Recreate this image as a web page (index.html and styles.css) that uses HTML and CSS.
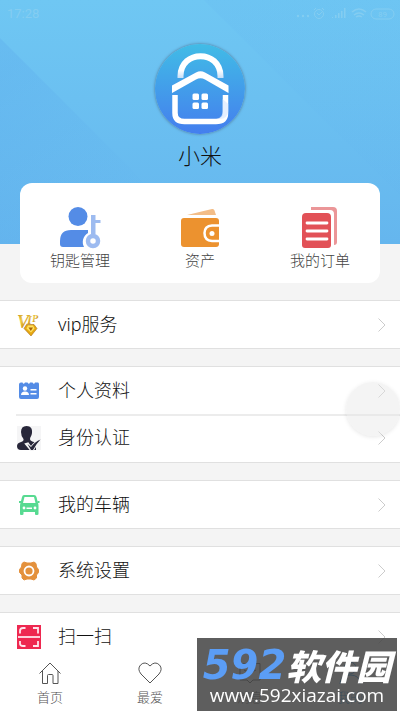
FILE: index.html
```html
<!DOCTYPE html>
<html lang="zh-CN">
<head>
<meta charset="utf-8">
<meta name="viewport" content="width=device-width, initial-scale=1">
<title>我的</title>
<link rel="stylesheet" href="styles.css">
</head>
<body>
<div class="app">
  <header class="hero">
    <svg class="hero-shapes" viewBox="0 0 400 244" preserveAspectRatio="none" aria-hidden="true">
      <defs>
        <linearGradient id="shadeLeft" x1="0" y1="0.2" x2="0.7" y2="0.8"><stop offset="0" stop-color="#5aa8ec" stop-opacity=".3"/><stop offset="1" stop-color="#5aa8ec" stop-opacity="0"/></linearGradient>
        <linearGradient id="shadeRight" x1="0" y1="0" x2="0.6" y2="0.6"><stop offset="0" stop-color="#5fb0ee" stop-opacity=".14"/><stop offset="1" stop-color="#5fb0ee" stop-opacity=".06"/></linearGradient>
      </defs>
      <path d="M0 38L160 198L206 244H0Z" fill="url(#shadeLeft)"/>
      <path d="M204 0L330 126L448 244H400V0Z" fill="url(#shadeRight)"/>
    </svg>
    <div class="status">
      <span>17:28</span>
      <svg width="100" height="14" viewBox="0 0 100 14" fill="none" stroke="currentColor" aria-hidden="true">
        <g fill="currentColor" stroke="none"><circle cx="3" cy="9" r="1.2"/><circle cx="8" cy="9" r="1.2"/><circle cx="13" cy="9" r="1.2"/><path d="M37 11h1v-1h-1zM40 11h1.500v-3H40zM43 11h1.500V6H43zM46 11h1.500V4H46zM49 11h1.500V1H49z"/></g>
        <circle cx="24" cy="7" r="4.500"/><path d="M22 6l2 2 3-3M19 3l2-2M29 3l-2-2"/>
        <path d="M57 5q7-6 14 0M59 8q5-4 10 0M61 10q3-2 6 0" stroke-width="1.500"/>
        <rect x="76" y="2" width="23" height="10" rx="5"/>
        <text x="87.500" y="10" text-anchor="middle" class="battery">89</text>
      </svg>
    </div>
    <div class="profile">
      <svg class="avatar" viewBox="0 0 90 90" role="img" aria-label="头像">
        <defs>
          <linearGradient id="disc" x1="0" y1="0" x2="0" y2="1"><stop offset="0" stop-color="#41bce6"/><stop offset="1" stop-color="#447eee"/></linearGradient>
          <linearGradient id="ring" x1="0" y1="0" x2="0" y2="1"><stop offset=".65" stop-color="#fff"/><stop offset="1" stop-color="#c7def8"/></linearGradient>
        </defs>
        <circle cx="45" cy="45" r="45" fill="url(#disc)"/>
        <path d="M25.500 34V32C26 5.500 65 5.500 65.500 32V34" fill="none" stroke="url(#ring)" stroke-width="6"/>
        <path d="M17 41.500L41 28.500Q45.500 26 50 28.500L73.500 41.500V49L50 35.500Q45.500 33 41 35.500L17 49Z" fill="#fff" stroke="#4b9fea" stroke-width="1" paint-order="stroke"/>
        <path d="M20 51V69Q20 77.500 29.500 77.500H61Q70.500 77.500 70.500 69V51" fill="none" stroke="#fff" stroke-width="5.500"/>
        <path d="M67.700 55V67Q67.700 73 62 74.800Q73 76 73.200 67V60Z" fill="#dceaff" opacity=".7"/>
        <g fill="#fff"><rect x="37.500" y="49.500" width="6.500" height="6.500" rx="1.500"/><rect x="46.500" y="49.500" width="6.500" height="6.500" rx="1.500"/><rect x="37.500" y="58.500" width="6.500" height="6.500" rx="1.500"/><rect x="46.500" y="58.500" width="6.500" height="6.500" rx="1.500"/></g>
      </svg>
      <h1 class="name">小米</h1>
    </div>
  </header>

  <nav class="card" aria-label="快捷入口">
    <a class="shortcut" href="#keys">
      <svg width="42" height="42" viewBox="0 0 42 42" aria-hidden="true">
        <circle cx="19" cy="9.500" r="9.500" fill="#548ce6"/>
        <path d="M1 37V34Q1 23 12 23H29V26C24 29 22.500 35 25 40H4Q1 40 1 37Z" fill="#548ce6"/>
        <path d="M32 8h4.500v5h5v3h-5v11h-4.500z" fill="#9dbbf0"/>
        <circle cx="34" cy="34" r="5" fill="none" stroke="#9dbbf0" stroke-width="4.500"/>
      </svg>
      <span>钥匙管理</span>
    </a>
    <a class="shortcut" href="#assets">
      <svg width="42" height="42" viewBox="0 0 42 42" aria-hidden="true">
        <path d="M8 8L33 2Q35 1.500 35.500 3.500L37 8Z" fill="#f3bd87"/>
        <rect x="2" y="11" width="38" height="29" rx="3" fill="#ec922f"/>
        <path d="M41 18.500H33Q25.500 19 25.500 26Q25.500 33.500 33 34H41" fill="none" stroke="#fff" stroke-width="2.500"/>
        <circle cx="33" cy="26.500" r="2.500" fill="#fff"/>
      </svg>
      <span>资产</span>
    </a>
    <a class="shortcut" href="#orders">
      <svg width="42" height="42" viewBox="0 0 42 42" aria-hidden="true">
        <path d="M12 0H34Q38 0 38 4V35Q38 38 35 38V7Q35 3 31 3H12Z" fill="#eb9698"/>
        <path d="M7 6H28Q32 6 32 10V38Q32 41 29 41H6Q3 41 3 38V10Q3 6 7 6Z" fill="#e25157"/>
        <path d="M8 16H28M8 24H28M8 32H28" stroke="#fff" stroke-width="2.800" stroke-linecap="round"/>
      </svg>
      <span>我的订单</span>
    </a>
  </nav>

  <main class="menu">
    <section class="group">
      <a class="row" href="#vip">
        <svg class="icon" viewBox="0 0 26 26" aria-hidden="true">
          <defs><linearGradient id="gold" x1="0" y1="0" x2="1" y2="1"><stop offset="0" stop-color="#b07a12"/><stop offset=".35" stop-color="#f2cf4a"/><stop offset=".65" stop-color="#c98b12"/><stop offset="1" stop-color="#edc22e"/></linearGradient></defs>
          <g class="vip" fill="url(#gold)"><text x="1" y="16" font-size="18">V</text><text x="11" y="12" font-size="12">I</text><text x="16" y="10" font-size="10">P</text></g>
          <path d="M10.500 12.500H18L21 16.500L15 24L8 16.500Z" fill="#e6a813" stroke="#9a5c08" stroke-width=".5"/><path d="M12 13.500H17L18.500 16.500L15 20.500L10.500 16.500Z" fill="#ffe260"/><path d="M12.500 15.500H17L14.800 19Z" fill="#a96208"/>
        </svg>
        <span class="label">vip服务</span>
        <svg class="chevron" viewBox="0 0 8 14" aria-hidden="true"><path d="M.500 .500L7 7L.500 13.500"/></svg>
      </a>
    </section>
    <section class="group">
      <a class="row" href="#profile">
        <svg class="icon" viewBox="0 0 26 26" aria-hidden="true">
          <path d="M5 4.500H6.500Q7.500 7 9 4.500H11.500Q13 7 14 4.500H16.500Q18 7 19 4.500H22Q23 4.500 23 6.500V19Q23 21 21 21H5Q3 21 3 19V6.500Q3 4.500 5 4.500Z" fill="#548ce6"/>
          <g fill="#fff"><circle cx="9" cy="10.500" r="2.200"/><path d="M5 17Q5 13.500 9 13.500T13 17Z"/><path d="M14.500 11H20.500V12.500H14.500ZM14.500 15H20.500V16.500H14.500Z"/></g>
        </svg>
        <span class="label">个人资料</span>
        <svg class="chevron" viewBox="0 0 8 14" aria-hidden="true"><path d="M.500 .500L7 7L.500 13.500"/></svg>
      </a>
      <a class="row" href="#identity">
        <svg class="icon" viewBox="0 0 26 26" aria-hidden="true">
          <rect x="1" y="1" width="24" height="24" fill="#f5f5f6"/>
          <path d="M10.500 1C15 1 16.500 4 16 8C15.700 11 14 12 14 14Q14 16 18 17L20 18V25H5Q1 25 1 21Q1 18 5 17Q8 16 7.500 14Q5 11 5 7Q5 1 10.500 1Z" fill="#28273a"/>
          <path d="M12 18.500L15 22.500Q19 17 24 15Q20 19 17 25H15L10 19Z" fill="#28273a" stroke="#f5f5f6" stroke-width="2"/>
          <path d="M11.500 19L15 22Q19 16.500 24.500 14.500Q20 19 17 25H15Z" fill="#28273a"/>
        </svg>
        <span class="label">身份认证</span>
        <svg class="chevron" viewBox="0 0 8 14" aria-hidden="true"><path d="M.500 .500L7 7L.500 13.500"/></svg>
      </a>
    </section>
    <section class="group">
      <a class="row" href="#cars">
        <svg class="icon" viewBox="0 0 26 26" aria-hidden="true">
          <path d="M8 3H18Q20 3 20.500 5L22 11Q22.500 12 22.500 14V22Q22.500 23 21 23H20Q19 23 19 22V20H7.500V22Q7.500 23 6 23H5Q4 23 4 22V14Q4 12 4.500 11L6 5Q6.500 3 8 3Z" fill="#57da91"/>
          <path d="M3 9H5V11H3ZM21.500 9H23.500V11H21.500Z" fill="#57da91"/>
          <path d="M8.500 5H18L19.500 11H7Z" fill="#fff"/><circle cx="8" cy="16" r="1.400" fill="#fff"/><circle cx="19" cy="16" r="1.400" fill="#fff"/><path d="M10.500 15.500H16V17H10.500Z" fill="#fff"/>
        </svg>
        <span class="label">我的车辆</span>
        <svg class="chevron" viewBox="0 0 8 14" aria-hidden="true"><path d="M.500 .500L7 7L.500 13.500"/></svg>
      </a>
    </section>
    <section class="group">
      <a class="row" href="#settings">
        <svg class="icon" viewBox="0 0 26 26" aria-hidden="true">
          <path d="M8 4L11 5H15L18 4L20 5.500L20.500 9L22.500 11.500V14.500L20.500 17V20L18 22L15 21H11L8 22L6 20V17L3.500 14.500V11.500L5.500 9L6 5.500Z" fill="#e4913c" stroke="#e4913c" stroke-linejoin="round"/>
          <circle cx="13" cy="13" r="4.500" fill="none" stroke="#fff" stroke-width="1.800"/>
        </svg>
        <span class="label">系统设置</span>
        <svg class="chevron" viewBox="0 0 8 14" aria-hidden="true"><path d="M.500 .500L7 7L.500 13.500"/></svg>
      </a>
    </section>
    <section class="group">
      <a class="row" href="#scan">
        <svg class="icon" viewBox="0 0 26 26" aria-hidden="true">
          <rect x="1" y="1" width="24" height="24" fill="#ee2850"/>
          <path d="M4 9.500V7Q4 4 7 4H9.500M17 4H22V9.500M4 17V19.500Q4 22 7 22H9.500M17 22H22V17" fill="none" stroke="#ffe4eb" stroke-width="1.800"/><path d="M2 13H24" stroke="#ffe4eb" stroke-width="1.800"/>
        </svg>
        <span class="label">扫一扫</span>
        <svg class="chevron" viewBox="0 0 8 14" aria-hidden="true"><path d="M.500 .500L7 7L.500 13.500"/></svg>
      </a>
    </section>
  </main>
</div>

<button class="assist" type="button" aria-label="悬浮球"></button>

<nav class="tabs" aria-label="主导航">
  <a class="tab" href="#home">
    <svg viewBox="0 0 24 24" aria-hidden="true"><path d="M1.500 12.500L12 2L22.500 12.500M4.500 10V22.500H9.500V14.500Q9.500 13.500 10.500 13.500H14Q15 13.500 15 14.500V22.500H20V10"/></svg>
    <span>首页</span>
  </a>
  <a class="tab" href="#favorites">
    <svg viewBox="0 0 24 24" aria-hidden="true"><path d="M12 22L3 13Q-1 8 2.500 4Q7-.500 12 5Q17-.500 21.500 4Q25 8 21 13Z"/></svg>
    <span>最爱</span>
  </a>
  <a class="tab" href="#messages">
    <svg viewBox="0 0 24 24" aria-hidden="true"><path d="M2 2.500H22V19H15L12 22L9 19H2ZM6 9Q9 12 12 9Q15 12 18 9"/></svg>
    <span>消息</span>
  </a>
  <a class="tab active" href="#me">
    <svg viewBox="0 0 24 24" aria-hidden="true"><circle cx="12" cy="7" r="6"/><path d="M2 23Q2 14 12 14T22 23"/></svg>
    <span>我的</span>
  </a>
</nav>

<aside class="watermark">
  <div class="brand"><span class="digits">592</span><span class="hanzi">软件园</span></div>
  <div class="site">www.592xiazai.com</div>
</aside>
</body>
</html>
```
FILE: styles.css
```css
* { box-sizing: border-box; }

body {
  margin: 0;
  background: #f4f4f4;
  color: #111;
  font-family: "Noto Sans", "Noto Sans CJK SC", sans-serif;
  font-weight: 300;
  height: 100vh;
  overflow: hidden;
}

a { color: inherit; text-decoration: none; }

.hero {
  position: relative;
  height: 244px;
  background: linear-gradient(#6fc7f3, #65b6ee);
}

.hero-shapes {
  position: absolute;
  inset: 0;
  width: 100%;
  height: 100%;
}

.status {
  position: relative;
  display: flex;
  justify-content: space-between;
  align-items: center;
  height: 28px;
  padding: 0 5px 0 7px;
  color: #84cdf1;
  font: 400 13px/28px Roboto, sans-serif;
}

.battery { font: 400 8px Roboto, sans-serif; fill: currentColor; stroke: none; }

.vip { font-family: "Liberation Serif", serif; font-style: italic; font-weight: 700; }

.profile {
  position: relative;
  display: flex;
  flex-direction: column;
  align-items: center;
  gap: 6px;
  padding-top: 16px;
}

.avatar {
  width: 90px;
  height: 90px;
  border-radius: 50%;
  box-shadow: 0 0 3px #4b6f8e;
}

.name { margin: 0; font-size: 22px; line-height: 30px; font-weight: 300; }

.card {
  position: relative;
  display: grid;
  grid-template-columns: repeat(3, 1fr);
  margin: -61px 20px 0;
  padding: 24px 0 12px;
  background: #fff;
  border-radius: 12px;
}

.shortcut {
  display: flex;
  flex-direction: column;
  align-items: center;
  font-size: 15px;
  line-height: 22px;
  color: #444;
}

.menu {
  display: flex;
  flex-direction: column;
  gap: 17px;
  margin-top: 17px;
}

.group {
  background: #fff;
  border-top: 1px solid #e0e0e0;
  border-bottom: 1px solid #e0e0e0;
}

.row {
  position: relative;
  display: flex;
  align-items: center;
  height: 47px;
  padding: 0 14px 0 16px;
}

.row + .row { height: 48px; }

.row + .row::before {
  content: "";
  position: absolute;
  inset: 0 0 auto 16px;
  border-top: 2px solid #ececec;
}

.icon { width: 26px; height: 26px; }

.label {
  flex: 1;
  margin-left: 16px;
  padding-bottom: 2px;
  font-size: 18px;
  line-height: 26px;
}

.chevron {
  width: 8px;
  height: 14px;
  fill: none;
  stroke: #ccc;
}

.assist {
  position: fixed;
  top: 382px;
  right: 0;
  width: 54px;
  height: 54px;
  padding: 0;
  border: 0;
  border-radius: 50%;
  background: rgba(230, 230, 230, 0.45);
  box-shadow: 0 1px 4px rgba(0, 0, 0, 0.1);
}

.tabs {
  position: fixed;
  inset: auto 0 0;
  display: grid;
  grid-template-columns: repeat(4, 1fr);
  height: 60px;
  padding-top: 10px;
  background: #fff;
}

.tab {
  display: flex;
  flex-direction: column;
  align-items: center;
  gap: 2px;
  font-size: 13px;
  line-height: 20px;
  color: #555;
}

.tab svg { width: 24px; height: 24px; fill: none; stroke: currentColor; }

.tab.active { color: #1687d9; }

.watermark {
  position: fixed;
  right: 3px;
  bottom: 0;
  width: 200px;
  height: 73px;
  padding-top: 8px;
  background: rgba(68, 68, 68, 0.86);
  color: #fff;
  text-align: center;
  white-space: nowrap;
}

.brand {
  display: flex;
  justify-content: center;
  align-items: center;
  height: 38px;
}

.digits { color: #5b9df5; font: italic 700 40px/36px "DejaVu Sans", sans-serif; }

.hanzi { font: italic 900 35px/36px "Noto Sans CJK SC", sans-serif; }

.site { font: 500 19px/22px "Open Sans", sans-serif; }
```
